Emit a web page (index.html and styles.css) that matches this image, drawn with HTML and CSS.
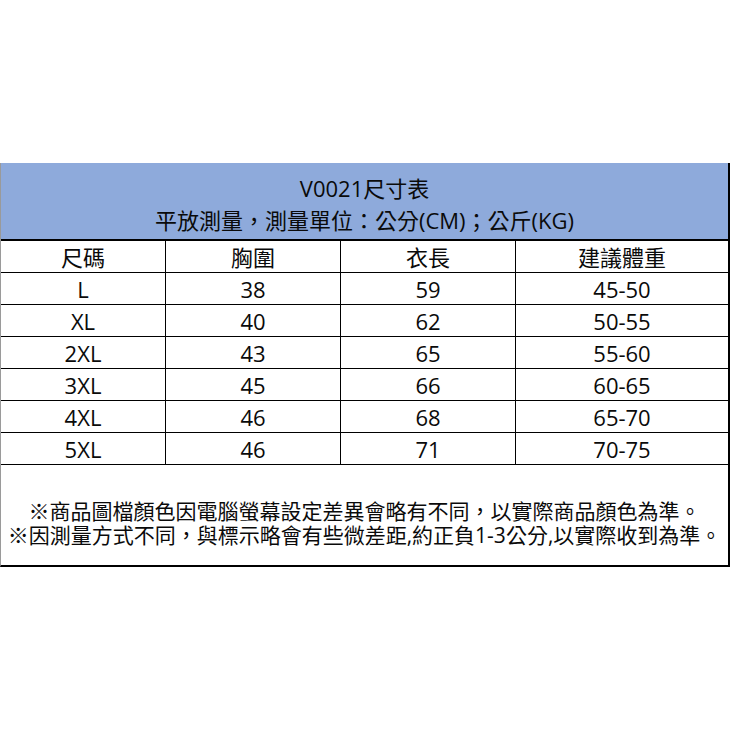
FILE: index.html
```html
<!DOCTYPE html>
<html lang="zh-Hant">
<head>
<meta charset="utf-8">
<link rel="stylesheet" href="styles.css">
</head>
<body>
<div class="sheet">
  <div class="title">
    <div>V0021尺寸表</div>
    <div>平放測量，測量單位：公分(CM)；公斤(KG)</div>
  </div>
  <div class="row">
    <div class="cell">尺碼</div>
    <div class="cell">胸圍</div>
    <div class="cell">衣長</div>
    <div class="cell">建議體重</div>
  </div>
  <div class="row">
    <div class="cell">L</div>
    <div class="cell">38</div>
    <div class="cell">59</div>
    <div class="cell">45-50</div>
  </div>
  <div class="row">
    <div class="cell">XL</div>
    <div class="cell">40</div>
    <div class="cell">62</div>
    <div class="cell">50-55</div>
  </div>
  <div class="row">
    <div class="cell">2XL</div>
    <div class="cell">43</div>
    <div class="cell">65</div>
    <div class="cell">55-60</div>
  </div>
  <div class="row">
    <div class="cell">3XL</div>
    <div class="cell">45</div>
    <div class="cell">66</div>
    <div class="cell">60-65</div>
  </div>
  <div class="row">
    <div class="cell">4XL</div>
    <div class="cell">46</div>
    <div class="cell">68</div>
    <div class="cell">65-70</div>
  </div>
  <div class="row">
    <div class="cell">5XL</div>
    <div class="cell">46</div>
    <div class="cell">71</div>
    <div class="cell">70-75</div>
  </div>
  <div class="notes">
    <div class="note">※商品圖檔顏色因電腦螢幕設定差異會略有不同，以實際商品顏色為準。</div>
    <div class="note">※因測量方式不同，與標示略會有些微差距,約正負1-3公分,以實際收到為準。</div>
  </div>
</div>
</body>
</html>
```
FILE: styles.css
```css
html, body {
  margin: 0;
  padding: 0;
  background: #fff;
}
body {
  font-family: "Open Sans", "Noto Sans CJK TC", sans-serif;
  color: #0a0a0a;
  font-size: 22px;
}
.sheet {
  box-sizing: border-box;
  margin-top: 163px;
  width: 730px;
  border-left: 1px solid #9a9a9a;
  border-right: 2px solid #000;
  border-bottom: 2px solid #000;
}
.title {
  height: 78px;
  background: #8eaadb;
  border-bottom: 2px solid #000;
  display: flex;
  flex-direction: column;
  justify-content: center;
  align-items: center;
  line-height: 32px;
  padding-top: 6px;
  box-sizing: border-box;
}
.row {
  display: grid;
  grid-template-columns: 165px 175px 175px 1fr;
  height: 32px;
  box-sizing: border-box;
  border-bottom: 1px solid #000;
}
.row:first-of-type {
  height: 31px;
}
.cell {
  display: flex;
  align-items: center;
  justify-content: center;
  border-right: 1px solid #000;
  line-height: 1;
}
.cell:last-child {
  border-right: none;
}
.notes {
  height: 100px;
  display: flex;
  flex-direction: column;
  justify-content: center;
  align-items: center;
  padding-top: 16px;
  box-sizing: border-box;
  font-size: 21px;
}
.note {
  height: 24px;
  line-height: 24px;
  white-space: nowrap;
}
```
